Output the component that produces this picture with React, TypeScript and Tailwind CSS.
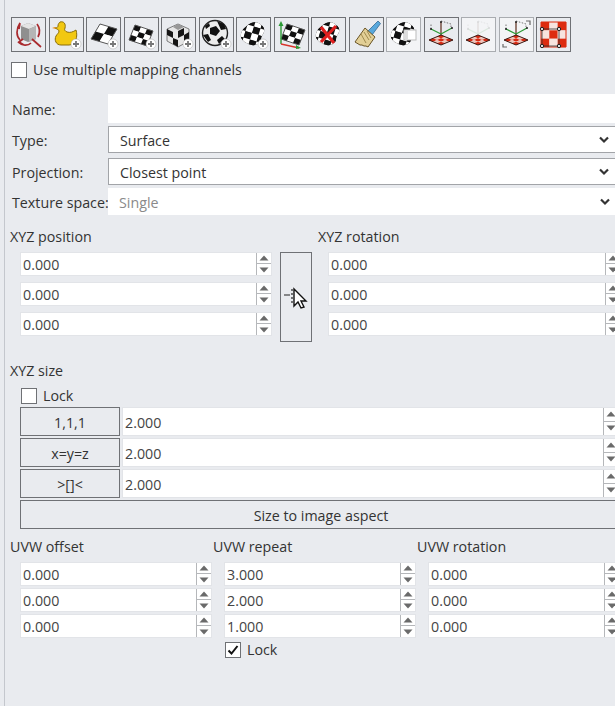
const font = "font-['Open_Sans','Noto_Sans',sans-serif]";

function Plus() {
	return (
		<g>
			<circle cx="26" cy="26" r="5" fill="#fff" stroke="#aaa" strokeWidth="0.5" />
			<path d="M26 23v6M23 26h6" stroke="#777" strokeWidth="1.8" />
		</g>
	);
}

function Checker({ n, m, on = "#ffffff", off = "#111", line = "#555" }: { n: number; m: string; on?: string; off?: string; line?: string }) {
	const cells = [];
	for (let y = 0; y < n; y++) {
		for (let x = 0; x < n; x++) {
			cells.push(<rect key={x + "-" + y} x={x / n} y={y / n} width={1 / n + 0.005} height={1 / n + 0.005} fill={(x + y) % 2 ? off : on} />);
		}
	}
	return (
		<g transform={m}>
			{cells}
			<rect x="0" y="0" width="1" height="1" fill="none" stroke={line} strokeWidth="1" vectorEffect="non-scaling-stroke" />
		</g>
	);
}

function Blob({ clip }: { clip: string }) {
	return (
		<g>
			<clipPath id={clip}>
				<path d="M4 19c-1-5 3-9 7-12 3-3 9-4 12-1 2 2 5 3 4 8-1 3-3 4-3 7 0 4-5 7-9 6-5-1-10-4-11-8z" />
			</clipPath>
			<g clipPath={`url(#${clip})`}>
				<rect x="0" y="0" width="32" height="32" fill="#111" />
				<Checker n={4} m="matrix(26 8 -8 26 6 -2)" />
			</g>
		</g>
	);
}

function Gizmo({ faded }: { faded?: boolean }) {
	return (
		<g>
			<g opacity={faded ? 0.12 : 1}>
				<path d="M16 18V4" stroke="#5b2a1a" strokeWidth="1.2" />
				<path d="M16 16L6 11M16 16l11-6" stroke="#2c9a35" strokeWidth="1.2" />
				<path d="M6 11V6M16 3l10 3v5" stroke="#555" strokeWidth="0.8" strokeDasharray="1.5 1.5" fill="none" />
				<circle cx="16" cy="4" r="1" fill="#222" />
				<circle cx="6" cy="11" r="1" fill="#222" />
				<circle cx="27" cy="10" r="1" fill="#222" />
			</g>
			<Checker n={3} m="matrix(12 5 -12 5 16 17)" on="#d62a12" off="#eec4ba" line="#3a1a14" />
		</g>
	);
}

const icons = [
	<g key="0">
		<path d="M9 8l7-3 8 3v13l-8 3-7-3z" fill="#8f8f8f" />
		<path d="M9 8l8 3 7-3-8-3z" fill="#e4e4e4" />
		<path d="M17 11v13l7-3V8z" fill="#b5b5b5" />
		<path d="M8 5l-1 6M8 5c-4 6-4 13 0 17M6 24c4 4 10 4 13 1M25 6c3 4 3 9 1 13M20 21l9 8M11 21l-4 3 5 3" fill="none" stroke="#a92a2e" strokeWidth="1.7" />
	</g>,
	<g key="1">
		<path d="M10 4c4-1 6 2 5 6-1 2 0 3 2 4 3 1 6 0 9-2 2 6 0 15-7 15H11c-5 0-7-5-5-9 1-2 3-3 3-5 0-1-2-2-4-3 2 0 3-1 3-2 0-2 1-3 2-4z" fill="#f2c811" stroke="#8a6d08" strokeWidth="1" />
		<path d="M5 9l-3 1 4 1z" fill="#e88a12" />
		<Plus />
	</g>,
	<g key="2">
		<Checker n={2} m="matrix(17 5 -9 15 13 6)" />
		<Plus />
	</g>,
	<g key="3">
		<Checker n={3} m="matrix(18 6 -6 15 10 7)" on="#111" off="#ffffff" />
		<Plus />
	</g>,
	<g key="4">
		<path d="M5 11l11-5 11 5v12l-11 6-11-6z" fill="#e6e6e6" stroke="#333" strokeWidth="0.6" />
		<path d="M11 9l5-3 6 3-6 3z" fill="#999" />
		<path d="M5 11l6 3v6l-6-3zM16 13l6-3v7l-6 3zM11 20l5 2v7l-5-3zM22 17l5-3v9l-5 3z" fill="#151515" />
		<Plus />
	</g>,
	<g key="5">
		<circle cx="15" cy="15" r="12.5" fill="#ececec" stroke="#222" strokeWidth="1.4" />
		<path d="M10 10l6-2 4 5-4 5-6-2zM17 3l7 3 2 5-5 1zM3 17l5-1 3 6-3 2zM17 22l5-4 3 3-6 5zM5 8l4-3 1 3-4 3z" fill="#111" />
		<Plus />
	</g>,
	<g key="6">
		<Blob clip="blob-a" />
		<Plus />
	</g>,
	<g key="7">
		<Checker n={3} m="matrix(18 6 -6 15 12 6)" on="#111" off="#ffffff" />
		<path d="M6 5v21" fill="none" stroke="#2c9a35" strokeWidth="1.4" />
		<path d="M6 26l18 4" fill="none" stroke="#d8342a" strokeWidth="1.4" />
		<path d="M3.5 8l2.5-5 2.5 5zM21 27l5 3-5 1z" fill="#2c9a35" />
	</g>,
	<g key="8">
		<Blob clip="blob-b" />
		<path d="M9 9l13 16M24 8L9 24" stroke="#e01f1f" strokeWidth="3.2" />
	</g>,
	<g key="9">
		<path d="M18 13L28 3l2.5 2.5L22 17z" fill="#58a8dc" stroke="#336a94" strokeWidth="0.8" />
		<path d="M15 10l10 9-7 10-2-1-2 0-2-1-2 0-5-3z" fill="#e2cf96" stroke="#6a5526" strokeWidth="1" />
		<path d="M11 16l5 9M14 14l5 8M17 13l4 7" stroke="#8f7a3c" strokeWidth="0.8" />
	</g>,
	<g key="10">
		<Blob clip="blob-c" />
		<rect x="17" y="12" width="12" height="10" fill="#fff" stroke="#bbb" />
		<rect x="17" y="13" width="4" height="8" fill="#ddd" />
	</g>,
	<g key="11"><Gizmo /></g>,
	<g key="12"><Gizmo faded /></g>,
	<g key="13">
		<Gizmo />
		<path d="M26 3h4v4M3 26v3h4" fill="none" stroke="#666" strokeWidth="1.2" />
	</g>,
	<g key="14">
		<Checker n={3} m="matrix(25 0 0 25 4 4)" on="#dd2c10" off="#f7e4df" line="#dd2c10" />
		<path d="M5 11h17v17H5z" fill="none" stroke="#333" strokeWidth="0.8" />
		<circle cx="5" cy="11" r="1.7" fill="#ddd" stroke="#222" />
		<circle cx="22" cy="11" r="1.7" fill="#ddd" stroke="#222" />
		<circle cx="5" cy="28" r="1.7" fill="#ddd" stroke="#222" />
		<circle cx="22" cy="28" r="1.7" fill="#ddd" stroke="#222" />
	</g>,
];

const disabled = [10, 12, 13];

function Check({ on }: { on?: boolean }) {
	return (
		<span className="flex h-[16px] w-[16px] shrink-0 items-center justify-center border border-[#6f7175] bg-white">
			{on && (
				<svg width="14" height="14" viewBox="0 0 14 14">
					<path d="M2.5 7.5l3 3 6-7.5" fill="none" stroke="#111" strokeWidth="2" />
				</svg>
			)}
		</span>
	);
}

function Caret({ up }: { up?: boolean }) {
	return (
		<span className={`flex h-1/2 items-center justify-center ${up ? "border-b border-[#b5b7ba]" : ""}`}>
			<svg width="10" height="6" viewBox="0 0 10 6">
				<path d={up ? "M5 0.5L9.5 5.5H0.5z" : "M0.5 0.5H9.5L5 5.5z"} fill="#6a6a6a" />
			</svg>
		</span>
	);
}

function Spin({ value, className, h = "h-[24px]", pad = "pt-[2px]" }: { value: string; className: string; h?: string; pad?: string }) {
	return (
		<div className={`flex ${h} ${className} border border-[#e2e4e8] bg-white text-[14.25px] text-[#444]`}>
			<span className={`flex-1 self-center pl-[2px] ${pad} leading-none`}>{value}</span>
			<span className="flex w-[15px] shrink-0 flex-col border-l border-[#b5b7ba]">
				<Caret up />
				<Caret />
			</span>
		</div>
	);
}

function Select({ label, value, muted }: { label: string; value: string; muted?: boolean }) {
	return (
		<div className="flex h-[27px] items-center">
			<span className="w-[98px] shrink-0 whitespace-nowrap pl-[2px] pt-[2px] text-[14.25px]">{label}</span>
			<div className={`flex h-full w-[515px] shrink-0 items-center justify-between pl-[11px] pr-[13px] bg-white ${muted ? "border-0 text-[#8a8a8a]" : "border border-[#a2a4a8] text-[#333]"}`}>
				<span className="pt-[2px] text-[14.25px]">{value}</span>
				<svg width="10" height="8" viewBox="0 0 10 8">
					<path d="M1 1.5l4 4 4-4" fill="none" stroke="#333" strokeWidth="2.2" />
				</svg>
			</div>
		</div>
	);
}

function Btn({ children, className }: { children: React.ReactNode; className: string }) {
	return <div className={`flex items-center justify-center border border-[#6f7175] bg-[#e9ebef] pt-[2px] text-[14.25px] text-[#333] ${className}`}>{children}</div>;
}

export default function App() {
	return (
		<div className={`h-[706px] w-[615px] overflow-hidden bg-[#e9ebef] text-[#333] ${font}`}>
			<div className="ml-[4px] h-full w-[620px] border-l border-[#c4c7cd] pl-[5px]">
				<div className="flex gap-[2.5px] pl-[1px] pt-[17px]">
					{icons.map((icon, i) => (
						<div key={i} className={`flex h-[35px] w-[35px] shrink-0 items-center justify-center border ${disabled.includes(i) ? "border-[#a9acb0] bg-[#f3f4f6]" : "border-[#6f7175] bg-[#e9ebef]"}`}>
							<svg width="33" height="33" viewBox="0 0 33 33">{icon}</svg>
						</div>
					))}
				</div>

				<div className="mt-[10px] flex h-[16px] items-center gap-[6px] pl-[1px]">
					<Check />
					<span className="pb-[1px] text-[14.25px]">Use multiple mapping channels</span>
				</div>

				<div className="mt-[16px] flex h-[29px] items-center">
					<span className="w-[98px] shrink-0 pl-[2px] pt-[2px] text-[14.25px]">Name:</span>
					<div className="h-full w-[515px] shrink-0 bg-white" />
				</div>
				<div className="mt-[3px]"><Select label="Type:" value="Surface" /></div>
				<div className="mt-[5px]"><Select label="Projection:" value="Closest point" /></div>
				<div className="mt-[3px]"><Select label="Texture space:" value="Single" muted /></div>

				<div className="mt-[12px] flex h-[20px] items-center pb-[1px] text-[14.25px]">
					<span className="w-[308px] shrink-0">XYZ position</span>
					<span>XYZ rotation</span>
				</div>
				<div className="mt-[5px] flex">
					<div className="ml-[10px] flex w-[252px] flex-col gap-[6px]">
						<Spin value="0.000" className="w-full" />
						<Spin value="0.000" className="w-full" />
						<Spin value="0.000" className="w-full" />
					</div>
					<div className="ml-[8px] flex h-[90px] w-[32px] items-center justify-center border border-[#6f7175]">
						<svg width="26" height="26" viewBox="0 0 26 26">
							<path d="M1 11h6M9 5v2M9 9v2M9 13v2M9 17v2" stroke="#222" strokeWidth="1.2" />
							<path d="M11 5v17l4-4 3 6 3-1-3-6h5z" fill="#fff" stroke="#111" strokeWidth="1.4" />
						</svg>
					</div>
					<div className="ml-[16px] flex w-[293px] flex-col gap-[6px]">
						<Spin value="0.000" className="w-full" />
						<Spin value="0.000" className="w-full" />
						<Spin value="0.000" className="w-full" />
					</div>
				</div>

				<div className="mt-[19px] flex h-[20px] items-center pb-[1px] text-[14.25px]">XYZ size</div>
				<div className="ml-[11px] mt-[7px] flex h-[16px] items-center gap-[6px]">
					<Check />
					<span className="pb-[1px] text-[14.25px]">Lock</span>
				</div>
				<div className="ml-[10px] mt-[3px] flex w-[610px] flex-col gap-[2px]">
					{["1,1,1", "x=y=z", ">[]<"].map((t) => (
						<div key={t} className="flex h-[29px] gap-[2px]">
							<Btn className="w-[100px] shrink-0">{t}</Btn>
							<Spin value="2.000" h="h-[29px]" pad="pt-[3px]" className="w-[497px] shrink-0" />
						</div>
					))}
					<Btn className="h-[29px] w-full pr-[8px]">Size to image aspect</Btn>
				</div>

				<div className="mt-[8px] flex h-[20px] items-center pb-[1px] text-[14.25px]">
					<span className="w-[203px] shrink-0">UVW offset</span>
					<span className="w-[204px] shrink-0">UVW repeat</span>
					<span>UVW rotation</span>
				</div>
				<div className="ml-[10px] mt-[5px] flex gap-[12px]">
					{[["0.000", "0.000", "0.000"], ["3.000", "2.000", "1.000"], ["0.000", "0.000", "0.000"]].map((col, i) => (
						<div key={i} className="flex w-[192px] flex-col gap-[2px]">
							{col.map((v, j) => (
								<Spin key={j} value={v} className="w-full" />
							))}
						</div>
					))}
				</div>
				<div className="ml-[215px] mt-[4px] flex h-[16px] items-center gap-[6px]">
					<Check on />
					<span className="pb-[1px] text-[14.25px]">Lock</span>
				</div>
			</div>
		</div>
	);
}
